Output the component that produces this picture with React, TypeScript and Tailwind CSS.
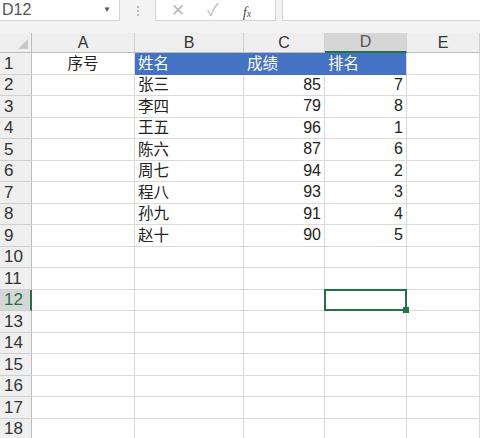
import React from 'react';

const font = { fontFamily: '"Liberation Sans", "Noto Sans CJK SC", sans-serif' };

const cols = ['A', 'B', 'C', 'D', 'E'];
const colWidths = ['w-[103px]', 'w-[109px]', 'w-[81px]', 'w-[82px]', 'flex-1'];

const rows: { name: string; score: number; rank: number }[] = [
    { name: '张三', score: 85, rank: 7 },
    { name: '李四', score: 79, rank: 8 },
    { name: '王五', score: 96, rank: 1 },
    { name: '陈六', score: 87, rank: 6 },
    { name: '周七', score: 94, rank: 2 },
    { name: '程八', score: 93, rank: 3 },
    { name: '孙九', score: 91, rank: 4 },
    { name: '赵十', score: 90, rank: 5 },
];

const Cell = ({ className = '', children }: { className?: string; children?: React.ReactNode }) => (
    <div className={`flex h-full shrink-0 items-center border-r border-b border-[#dadada] px-[3px] ${className}`}>{children}</div>
);

const Row = ({ n, cells }: { n: number; cells: React.ReactNode[] }) => {
    const selected = n === 12;
    return (
        <div className="flex h-[21.5px]">
            <div
                className={`flex h-full w-[32px] shrink-0 items-center border-b border-[#d0d0d0] pl-[4px] text-[17px] ${
                    selected ? 'border-r-2 border-r-[#217346] bg-[#d6d6d6] text-[#217346]' : 'border-r border-r-[#bdbdbd] bg-[#efefef] text-[#333]'
                }`}
            >
                {n}
            </div>
            {cells.map((c, i) => (
                <React.Fragment key={i}>{c}</React.Fragment>
            ))}
        </div>
    );
};

export default function App() {
    const allRows: React.ReactNode[][] = [];
    allRows.push([
        <Cell key="a" className="w-[103px] justify-center">序号</Cell>,
        <Cell key="b" className="w-[109px] border-b-[#4472c4] border-r-[#4472c4] bg-[#4472c4] text-white">姓名</Cell>,
        <Cell key="c" className="w-[81px] border-b-[#4472c4] border-r-[#4472c4] bg-[#4472c4] text-white">成绩</Cell>,
        <Cell key="d" className="w-[82px] border-b-[#4472c4] bg-[#4472c4] text-white">排名</Cell>,
        <Cell key="e" className="flex-1" />,
    ]);
    rows.forEach((r) => {
        allRows.push([
            <Cell key="a" className="w-[103px]" />,
            <Cell key="b" className="w-[109px]">{r.name}</Cell>,
            <Cell key="c" className="w-[81px] justify-end text-[16px]">{r.score}</Cell>,
            <Cell key="d" className="w-[82px] justify-end text-[16px]">{r.rank}</Cell>,
            <Cell key="e" className="flex-1" />,
        ]);
    });
    for (let i = 10; i <= 18; i++) {
        allRows.push([
            <Cell key="a" className="w-[103px]" />,
            <Cell key="b" className="w-[109px]" />,
            <Cell key="c" className="w-[81px]" />,
            <Cell key="d" className="relative w-[82px]">
                {i === 12 && (
                    <div className="absolute -top-px -right-px -bottom-px -left-px z-10 border-2 border-[#217346]">
                        <div className="absolute -right-[4px] -bottom-[4px] h-[6px] w-[6px] bg-[#217346]" />
                    </div>
                )}
            </Cell>,
            <Cell key="e" className="flex-1" />,
        ]);
    }

    return (
        <div className="h-[438px] w-[480px] overflow-hidden bg-white text-[15.5px] text-[#222]" style={font}>
            {/* formula bar */}
            <div className="flex h-[33px] items-start bg-[#f3f3f3]">
                <div className="flex h-[21px] w-[120px] items-center justify-between border-r border-b border-[#d4d4d4] bg-white pr-[8px] pl-[2px] text-[16px] text-[#555]">
                    <span>D12</span>
                    <span className="text-[8px] text-[#555]">▼</span>
                </div>
                <div className="flex h-[21px] w-[35px] flex-col items-center justify-center gap-[2px]">
                    <span className="h-[2px] w-[2px] rounded-full bg-[#aaa]" />
                    <span className="h-[2px] w-[2px] rounded-full bg-[#aaa]" />
                    <span className="h-[2px] w-[2px] rounded-full bg-[#aaa]" />
                </div>
                <div className="flex h-[21px] w-[121px] items-center border-x border-b border-[#d4d4d4] bg-white text-[#bbb]">
                    <span className="ml-[15px] text-[17px] leading-none">✕</span>
                    <span className="ml-[22px] text-[17px] leading-none">✓</span>
                    <span className="mt-[4px] ml-[24px] text-[15px] text-[#555] italic" style={{ fontFamily: '"Liberation Serif", serif' }}>
                        f<span className="text-[10px]">x</span>
                    </span>
                </div>
                <div className="ml-[6px] h-[21px] flex-1 border-b border-l border-[#d4d4d4] bg-white" />
            </div>

            {/* column headers */}
            <div className="flex h-[20px] bg-[#efefef] text-[16px] text-[#333]">
                <div className="relative w-[32px] shrink-0 border-r border-b border-[#bdbdbd]">
                    <svg className="absolute right-[3px] bottom-[3px]" width="10" height="10" viewBox="0 0 10 10">
                        <polygon points="10,0 10,10 0,10" fill="#c8c8c8" />
                    </svg>
                </div>
                {cols.map((c, i) => (
                    <div
                        key={c}
                        className={`flex shrink-0 items-center justify-center border-r border-[#d0d0d0] ${colWidths[i]} ${
                            c === 'D' ? 'border-b-2 border-b-[#217346] bg-[#d6d6d6] text-[#555]' : 'border-b border-b-[#bdbdbd]'
                        }`}
                    >
                        {c}
                    </div>
                ))}
            </div>

            {allRows.map((cells, i) => (
                <Row key={i} n={i + 1} cells={cells} />
            ))}
        </div>
    );
}
